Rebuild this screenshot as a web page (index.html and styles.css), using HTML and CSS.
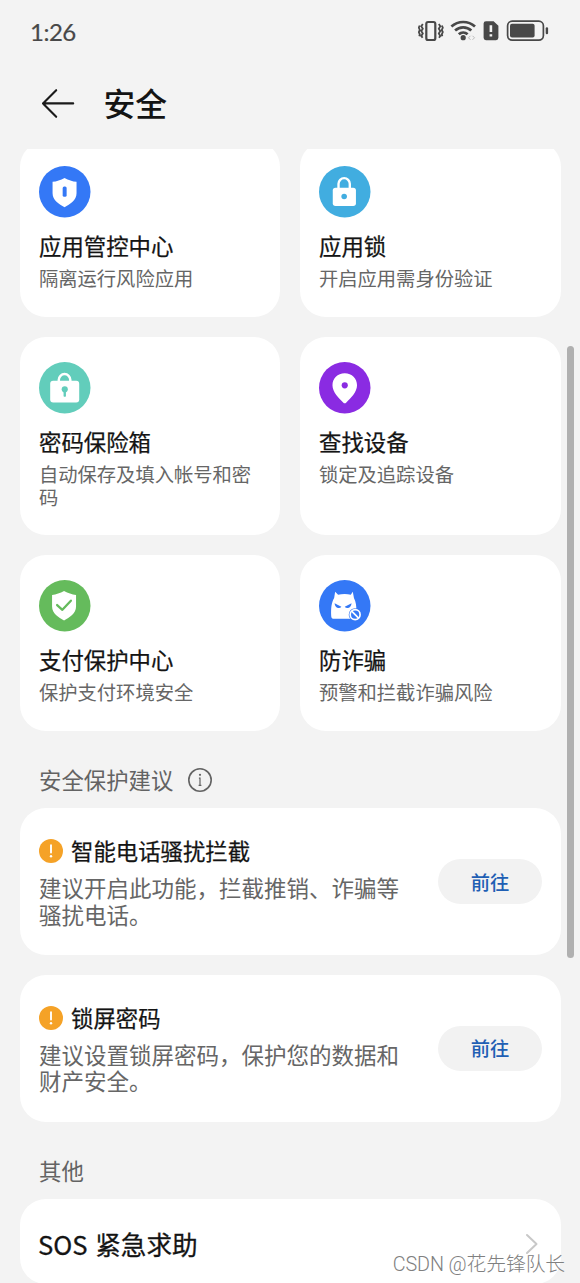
FILE: index.html
```
<!DOCTYPE html>
<html lang="zh-CN">
<head>
<meta charset="utf-8">
<title>安全</title>
<link rel="stylesheet" href="styles.css">
</head>
<body>
<div class="screen">
  <div class="status">
    <span class="time">1:26</span>
    <svg class="status-icons" width="132" height="24" viewBox="418 19 132 24" fill="none" stroke="#484848">
      <rect x="426.3" y="22" width="9" height="18" rx="1.8" stroke-width="2.2"/>
      <path d="M422.8 24l-1.5 2.3 1.5 2.4-1.5 2.4 1.5 2.4-1.5 2.4 1.3 1.8M419.7 25.5l-.9 2.2 1 2.2-1 2.2 1 2.2-.5 2M438.8 24l1.5 2.3-1.5 2.4 1.5 2.4-1.5 2.4 1.5 2.4-1.3 1.8M441.9 25.5l.9 2.2-1 2.2 1 2.2-1 2.2.5 2" stroke-width="1.8"/>
      <path d="M451.4 26.6a17.5 17.5 0 0 1 23.6 0M455.1 30.6a12 12 0 0 1 16.2 0M458.8 34.3a6.5 6.5 0 0 1 8.8 0" stroke-width="2.7"/>
      <circle cx="463.2" cy="37.7" r="2.6" fill="#484848" stroke="none"/>
      <path d="M470.5 35.8l-2 2 2 2M472.5 35.8l2 2-2 2" stroke="#bbb" stroke-width="1"/>
      <path d="M486 21.2h7.6l4.8 4.6v12a2.4 2.4 0 0 1-2.4 2.4h-10a2.4 2.4 0 0 1-2.4-2.4V23.6a2.4 2.4 0 0 1 2.4-2.4z" fill="#484848" stroke="none"/>
      <path d="M490.9 25.3v6.6M490.9 34.2v2.4" stroke="#f3f3f3" stroke-width="2.6"/>
      <rect x="507.6" y="21.2" width="35.8" height="19" rx="4.6" stroke-width="1.7"/>
      <rect x="510" y="23.8" width="24.6" height="13.8" rx="2" fill="#484848" stroke="none"/>
      <path d="M546.9 28.5v4.6" stroke-width="2.4" stroke-linecap="round"/>
    </svg>
  </div>

  <header class="header">
    <svg class="back" width="34" height="32" viewBox="0 0 34 32" fill="none" stroke="#1a1a1a" stroke-width="2.1" stroke-linecap="round" stroke-linejoin="round"><path d="M15.2 2.2L2 15.4l13.2 13.4M2 15.4h30.2"/></svg>
    <h1 class="page-title">安全</h1>
  </header>

  <main class="scroller">
    <div class="grid">
      <section class="card tile">
        <svg class="icon" viewBox="0 0 52 52"><circle cx="26" cy="26" r="26" fill="#3478f6"/><path d="M25.8 12c4 2.2 8 3.4 12.1 4v11.6c0 7-6.6 11.2-12.1 14-5.5-2.8-12.1-7-12.1-14V16c4.1-.6 8.1-1.8 12.1-4z" fill="#fff"/><rect x="23.9" y="20.7" width="4" height="10.4" rx="1.6" fill="#3478f6"/></svg>
        <h2 class="title">应用管控中心</h2><p class="sub">隔离运行风险应用</p>
      </section>
      <section class="card tile">
        <svg class="icon" viewBox="0 0 52 52"><circle cx="26" cy="26" r="26" fill="#41ade0"/><path d="M19.7 24v-6a5.7 5.7 0 0 1 11.4 0v6" fill="none" stroke="#fff" stroke-width="2.4"/><rect x="13.9" y="22" width="23.4" height="18.4" rx="2.8" fill="#fff"/><circle cx="25.4" cy="30.7" r="2.8" fill="#41ade0"/></svg>
        <h2 class="title">应用锁</h2><p class="sub">开启应用需身份验证</p>
      </section>
      <section class="card tile tile-tall">
        <svg class="icon" viewBox="0 0 52 52"><circle cx="26" cy="26" r="26" fill="#62cdbb"/><path d="M20 20v-2a5.8 5.8 0 0 1 11.6 0v2" fill="none" stroke="#fff" stroke-width="2.5"/><rect x="11.3" y="19" width="29.3" height="21.9" rx="3" fill="#fff"/><circle cx="26" cy="27.6" r="3.1" fill="#62cdbb"/><path d="M26 28v6" stroke="#62cdbb" stroke-width="2.4" stroke-linecap="round"/></svg>
        <h2 class="title">密码保险箱</h2><p class="sub">自动保存及填入帐号和密码</p>
      </section>
      <section class="card tile tile-tall">
        <svg class="icon" viewBox="0 0 52 52"><circle cx="26" cy="26" r="26" fill="#8a2be2"/><path d="M26 11.4c7.3 0 12.4 5.4 12.4 12 0 7-6.6 13.1-10.8 17.5a2.2 2.2 0 0 1-3.2 0C20.2 36.5 13.6 30.4 13.6 23.4c0-6.6 5.1-12 12.4-12z" fill="#fff"/><circle cx="26" cy="23.6" r="3.1" fill="#8a2be2"/></svg>
        <h2 class="title">查找设备</h2><p class="sub">锁定及追踪设备</p>
      </section>
      <section class="card tile">
        <svg class="icon" viewBox="0 0 52 52"><circle cx="26" cy="26" r="26" fill="#65bb5c"/><path d="M25.3 11.2c4 2.2 8 3.4 12.1 4v11.6c0 7-6.6 11.2-12.1 14-5.5-2.8-12.1-7-12.1-14V15.2c4.1-.6 8.1-1.8 12.1-4z" fill="#fff"/><path d="M18.3 25.3l5.3 4.8 8.6-9.2" fill="none" stroke="#65bb5c" stroke-width="2.3" stroke-linecap="round" stroke-linejoin="round"/></svg>
        <h2 class="title">支付保护中心</h2><p class="sub">保护支付环境安全</p>
      </section>
      <section class="card tile">
        <svg class="icon" viewBox="0 0 52 52"><circle cx="26" cy="26" r="26" fill="#3478f6"/><path d="M16.3 11.8l3 3.2c4-1.300 9.200-1.300 12.800 0l2-3.200 1.200 6.400c2 3.600 2.600 8.800 2.400 13.300v7.700H15.500a3.200 3.200 0 0 1-3.200-3.200c-.3-7 .2-13.200 3-17.700z" fill="#fff"/><path d="M15.700 23.600l6.900 3.300c-2.800 3-6.400 1.200-6.900-3.300zM32.900 23.600L26 26.900c2.800 3 6.400 1.200 6.900-3.300z" fill="#3478f6"/><circle cx="36.500" cy="35" r="6.500" fill="#3478f6"/><circle cx="36.500" cy="35" r="5" fill="none" stroke="#fff" stroke-width="1.700"/><path d="M33 31.500l7 7" stroke="#fff" stroke-width="1.700"/></svg>
        <h2 class="title">防诈骗</h2><p class="sub">预警和拦截诈骗风险</p>
      </section>
    </div>

    <div class="section-head">
      <span class="section-title">安全保护建议</span>
      <svg class="info" width="26" height="26" viewBox="0 0 26 26"><circle cx="13" cy="13" r="11.2" fill="none" stroke="#636363" stroke-width="1.6"/><circle cx="13" cy="7.8" r="1.1" fill="#636363"/><path d="M11.9 11.2H13v7.2M11.6 18.4h2.8" fill="none" stroke="#636363" stroke-width="1.2"/></svg>
    </div>

    <div class="tips">
      <section class="card tip">
        <div class="tip-body">
          <div class="tip-head"><svg class="alert" viewBox="0 0 24 24"><circle cx="12" cy="12" r="12" fill="#f5a227"/><path d="M12 6.2v7.4" stroke="#fff" stroke-width="1.9" stroke-linecap="round"/><circle cx="12" cy="17.3" r="1.2" fill="#fff"/></svg><h2 class="title">智能电话骚扰拦截</h2></div>
          <p class="tip-text">建议开启此功能，拦截推销、诈骗等骚扰电话。</p>
        </div>
        <button class="go">前往</button>
      </section>
      <section class="card tip">
        <div class="tip-body">
          <div class="tip-head"><svg class="alert" viewBox="0 0 24 24"><circle cx="12" cy="12" r="12" fill="#f5a227"/><path d="M12 6.2v7.4" stroke="#fff" stroke-width="1.9" stroke-linecap="round"/><circle cx="12" cy="17.3" r="1.2" fill="#fff"/></svg><h2 class="title">锁屏密码</h2></div>
          <p class="tip-text">建议设置锁屏密码，保护您的数据和财产安全。</p>
        </div>
        <button class="go">前往</button>
      </section>
    </div>

    <div class="section-head section-other">其他</div>
    <section class="card row">
      <span class="row-title">SOS 紧急求助</span>
      <svg class="chevron" width="14" height="22" viewBox="0 0 14 22" fill="none" stroke="#c8c8c8" stroke-width="2" stroke-linecap="round" stroke-linejoin="round"><path d="M2 2l9.5 9L2 20"/></svg>
    </section>
  </main>
  <div class="scrollbar"></div>
  <div class="watermark">CSDN @花先锋队长</div>
</div>
</body>
</html>
```
FILE: styles.css
```
* { box-sizing: border-box; margin: 0; padding: 0; }

body {
  background: #f3f3f3;
  color: #141414;
  font-family: "Noto Sans CJK SC", sans-serif;
}

.screen {
  position: relative;
  display: flex;
  flex-direction: column;
  width: 580px;
  height: 1283px;
  overflow: hidden;
}

svg { display: block; flex: none; }

.status {
  display: flex;
  align-items: center;
  justify-content: space-between;
  height: 62px;
  padding: 0 30px;
}

.time {
  padding-top: 1px;
  color: #484848;
  font: 400 24px/30px Lato, sans-serif;
  letter-spacing: -0.5px;
  -webkit-text-stroke: 0.2px #484848;
}

.header {
  display: flex;
  align-items: center;
  gap: 28.5px;
  height: 87px;
  padding: 0 40px 4px 41px;
}

.page-title {
  margin-top: -3px;
  font-size: 31.8px;
  font-weight: 500;
  line-height: 40px;
}

.scroller {
  flex: 1;
  min-height: 0;
  padding: 0 19px 0 20px;
  overflow: hidden;
}

.grid {
  display: grid;
  grid-template-columns: 260px 261px;
  gap: 20px;
  margin-top: -8px;
}

.card { background: #fff; border-radius: 26px; }

.tile { height: 176px; padding: 25px 19px 0; }
.tile-tall { height: 198px; }
.icon { width: 51.5px; height: 51.5px; }

.title {
  font-size: 22.4px;
  font-weight: 400;
  line-height: 28px;
  -webkit-text-stroke: 0.25px #141414;
}

.tile .title { margin-top: 13.5px; }

.sub {
  margin-top: 8px;
  color: #666;
  font-size: 19.3px;
  line-height: 22.5px;
}

.section-head {
  display: flex;
  align-items: center;
  gap: 14px;
  height: 77px;
  padding: 20px 19px 0;
  color: #636363;
  font-size: 22.4px;
  line-height: 28px;
}

.section-title { margin-top: -2px; }
.section-other { height: 77.5px; padding-top: 19px; }

.tips { display: flex; flex-direction: column; gap: 20px; }

.tip {
  display: flex;
  align-items: center;
  justify-content: space-between;
  height: 147px;
  padding: 0 19px;
}

.tip + .tip { height: 146.5px; }
.tip-body { width: 366px; padding-top: 2px; }
.tip-head { display: flex; align-items: center; gap: 8px; }
.tip-head .title { margin-top: -2px; }
.alert { width: 24px; height: 24px; }

.tip-text {
  margin-top: 10px;
  color: #666;
  font-size: 22.5px;
  line-height: 26.5px;
}

.go {
  width: 104px;
  height: 45px;
  border: 0;
  border-radius: 23px;
  background: #f2f2f2;
  color: #1f5fb4;
  font: 500 19.3px/28px "Noto Sans CJK SC", sans-serif;
}

.row {
  display: flex;
  align-items: center;
  justify-content: space-between;
  height: 85px;
  padding: 5px 22px 0 18px;
}

.row-title {
  font-size: 25.6px;
  font-weight: 400;
  line-height: 34px;
  word-spacing: 2px;
  -webkit-text-stroke: 0.3px #141414;
}

.scrollbar {
  position: absolute;
  top: 346px;
  right: 6px;
  width: 7px;
  height: 612px;
  border-radius: 4px;
  background: #b0b0b0;
}

.watermark {
  position: absolute;
  right: 15px;
  bottom: 4px;
  color: #808080;
  font: 300 19.8px/28px Roboto, "Noto Sans CJK SC", sans-serif;
  letter-spacing: -0.1px;
  white-space: nowrap;
}
```
